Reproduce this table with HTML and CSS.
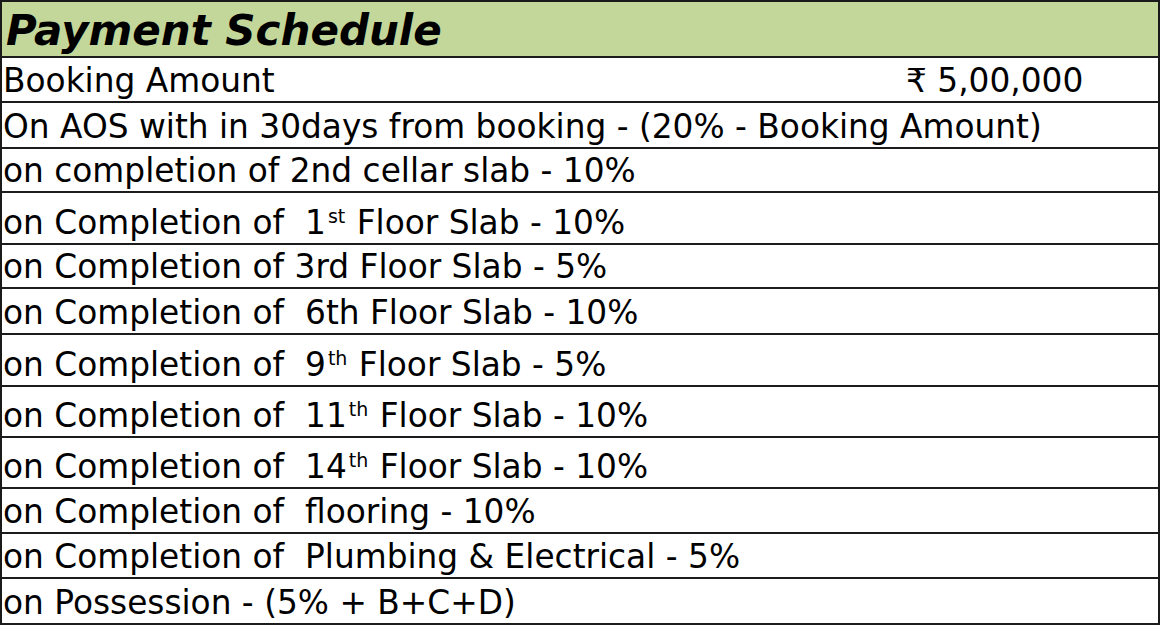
FILE: index.html
```html
<!DOCTYPE html>
<html lang="en">
<head>
<meta charset="utf-8">
<title>Payment Schedule</title>
<link rel="stylesheet" href="styles.css">
</head>
<body>
<div class="sheet">
  <div class="row head"><span class="cell title">Payment Schedule</span></div>
  <div class="row"><span class="cell label">Booking Amount</span><span class="cell amount">₹ 5,00,000</span></div>
  <div class="row"><span class="cell">On AOS with in 30days from booking - (20% - Booking Amount)</span></div>
  <div class="row"><span class="cell">on completion of 2nd cellar slab - 10%</span></div>
  <div class="row"><span class="cell">on Completion of  1<sup class="ord">st</sup> Floor Slab - 10%</span></div>
  <div class="row"><span class="cell">on Completion of 3rd Floor Slab - 5%</span></div>
  <div class="row"><span class="cell">on Completion of  6th Floor Slab - 10%</span></div>
  <div class="row"><span class="cell">on Completion of  9<sup class="ord">th</sup> Floor Slab - 5%</span></div>
  <div class="row"><span class="cell">on Completion of  11<sup class="ord">th</sup> Floor Slab - 10%</span></div>
  <div class="row"><span class="cell">on Completion of  14<sup class="ord">th</sup> Floor Slab - 10%</span></div>
  <div class="row"><span class="cell">on Completion of  flooring - 10%</span></div>
  <div class="row"><span class="cell">on Completion of  Plumbing &amp; Electrical - 5%</span></div>
  <div class="row"><span class="cell">on Possession - (5% + B+C+D)</span></div>
</div>
</body>
</html>
```

FILE: styles.css
```css
html, body {
  margin: 0;
  padding: 0;
  background: #ffffff;
}

body {
  font-family: "DejaVu Sans", "Liberation Sans", sans-serif;
  color: #000000;
}

.sheet {
  width: 1160px;
  box-sizing: border-box;
  border: 2px solid #1a1a1a;
  border-bottom: none;
  display: grid;
  grid-template-columns: 1fr;
  grid-template-rows: 56px 45px 46px 44px 52px 44px 46px 52px 51px 51px 45px 45px 46px;
}

.row {
  box-sizing: border-box;
  border-bottom: 2px solid #1c1c1c;
  display: flex;
  align-items: flex-end;
  font-size: 32.8px;
  line-height: 1;
  padding: 0 0 3px 1px;
  overflow: hidden;
}

.cell {
  white-space: pre;
}

.head {
  background: #c4d79b;
  padding: 0 0 4px 4px;
}

.title {
  font-size: 42px;
  font-weight: bold;
  font-style: italic;
}

.label {
  width: 899px;
}

.amount {
  padding-left: 4px;
}

.ord {
  font-size: 19px;
  line-height: 0;
  vertical-align: 11px;
  padding-left: 2px;
  padding-right: 1px;
}
```
